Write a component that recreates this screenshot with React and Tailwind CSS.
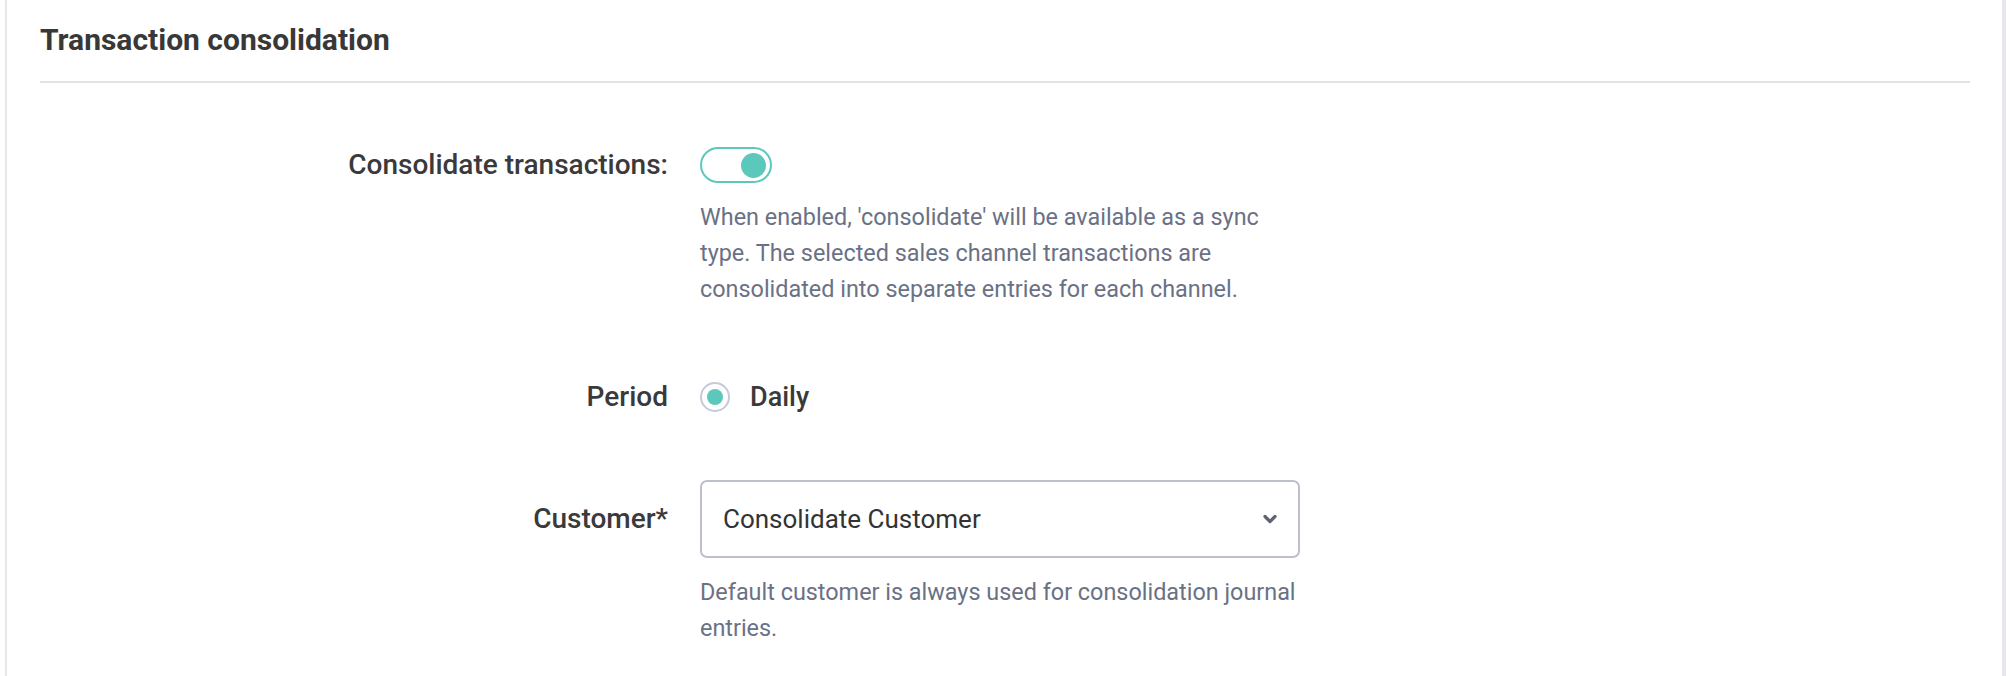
export default function App() {
  return (
    <div className="min-h-screen bg-white font-['Roboto',sans-serif]">
      <div className="ml-[5px] min-h-[676px] border-l-2 border-r-4 border-[#e6e6eb] bg-white pl-[33px] pr-[32px] pt-[22px]">
        <h2 className="text-[30px] font-bold leading-[36px] text-[#383838]">Transaction consolidation</h2>
        <div className="mt-[23px] h-[2px] bg-[#e2e2e8]" />

        <div className="pt-[64px]">
          {/* consolidate toggle */}
          <div className="flex gap-[32px]">
            <div className="w-[628px] shrink-0 text-right text-[28px] font-medium leading-[36px] text-[#3a3a3a]">
              Consolidate transactions:
            </div>
            <div>
              <button className="flex h-[36px] w-[72px] items-center justify-end rounded-full border-2 border-[#5cc8bc] bg-white pr-[4px]">
                <span className="block h-[25px] w-[25px] rounded-full bg-[#5cc8bc]" />
              </button>
              <p className="mt-[16px] max-w-[610px] text-[23.4px] leading-[36px] text-[#6b7185]">
                When enabled, 'consolidate' will be available as a sync type. The selected sales channel transactions are
                consolidated into separate entries for each channel.
              </p>
            </div>
          </div>

          {/* period */}
          <div className="mt-[72px] flex gap-[32px]">
            <div className="w-[628px] shrink-0 text-right text-[28px] font-medium leading-[36px] text-[#3a3a3a]">
              Period
            </div>
            <label className="flex items-center gap-[20px]">
              <span className="flex h-[30px] w-[30px] items-center justify-center rounded-full border-2 border-[#c6c9d9] bg-white">
                <span className="block h-[16px] w-[16px] rounded-full bg-[#5cc8bc]" />
              </span>
              <span className="text-[27px] font-medium leading-[36px] text-[#3a3a3a]">Daily</span>
            </label>
          </div>

          {/* customer */}
          <div className="mt-[65px] flex gap-[32px]">
            <div className="flex h-[78px] w-[628px] shrink-0 items-center justify-end text-[28px] font-medium text-[#3a3a3a]">
              Customer*
            </div>
            <div>
              <div className="flex h-[78px] w-[600px] items-center justify-between rounded-[7px] border-2 border-[#bcbfce] bg-white pl-[21px] pr-[21px]">
                <span className="text-[26px] text-[#333333]">Consolidate Customer</span>
                <svg width="14" height="10" viewBox="0 0 14 10" className="text-[#5f6374]">
                  <path d="M2 2.5 L7 7.5 L12 2.5" fill="none" stroke="currentColor" strokeWidth="3.2" strokeLinecap="round" strokeLinejoin="round" />
                </svg>
              </div>
              <p className="mt-[16px] max-w-[610px] text-[23.4px] leading-[36px] text-[#6b7185]">
                Default customer is always used for consolidation journal entries.
              </p>
            </div>
          </div>
        </div>
      </div>
    </div>
  )
}
